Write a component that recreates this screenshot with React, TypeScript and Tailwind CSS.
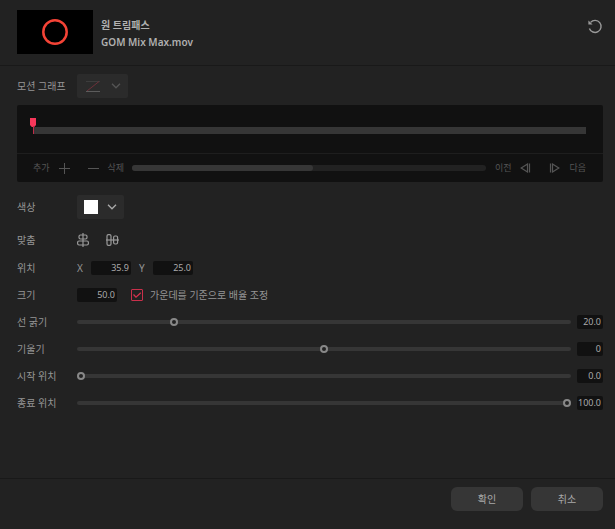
import { useId, useState } from "react";
import type { ReactNode } from "react";

function Chevron({ className }: { className: string }) {
  return (
    <svg viewBox="0 0 10 6" className={"h-[6px] w-[10px] " + className} fill="none" stroke="currentColor" strokeWidth="1.3">
      <path d="M1 0.8 5 4.8 9 0.8" />
    </svg>
  );
}

function Row({ label, htmlFor, className, children }: { label: string; htmlFor?: string; className: string; children: ReactNode }) {
  return (
    <div className={"flex items-center " + className}>
      <label htmlFor={htmlFor} className="w-[60px] shrink-0">
        {label}
      </label>
      {children}
    </div>
  );
}

function NumberBox({ id, initial }: { id: string; initial: string }) {
  const [value, setValue] = useState(initial);
  return (
    <input
      id={id}
      type="text"
      inputMode="decimal"
      value={value}
      onChange={(e) => setValue(e.target.value)}
      className="h-[14px] w-[40px] shrink-0 rounded-xs bg-[#111] pr-[2px] text-right text-[9px] leading-[14px] text-[#aaa] outline-none"
    />
  );
}

function SliderRow({ label, min, max, initial, decimals }: { label: string; min: number; max: number; initial: number; decimals: number }) {
  const id = useId();
  const [value, setValue] = useState(initial);
  return (
    <Row label={label} htmlFor={id} className="h-[27px]">
      <input
        id={id}
        type="range"
        min={min}
        max={max}
        value={value}
        onChange={(e) => setValue(Number(e.target.value))}
        className="h-[8px] min-w-0 flex-1 appearance-none bg-transparent [&::-webkit-slider-runnable-track]:h-[4px] [&::-webkit-slider-runnable-track]:rounded-full [&::-webkit-slider-runnable-track]:bg-[#363636] [&::-webkit-slider-thumb]:-mt-[2px] [&::-webkit-slider-thumb]:size-[8px] [&::-webkit-slider-thumb]:appearance-none [&::-webkit-slider-thumb]:rounded-full [&::-webkit-slider-thumb]:border-2 [&::-webkit-slider-thumb]:border-[#888] [&::-webkit-slider-thumb]:bg-[#222]"
      />
      <input
        aria-label={label + " 값"}
        type="text"
        inputMode="decimal"
        value={value.toFixed(decimals)}
        onChange={(e) => setValue(Number(e.target.value) || 0)}
        className="ml-[6px] h-[14px] w-[26px] shrink-0 rounded-xs bg-[#111] pr-[2px] text-right text-[9px] leading-[14px] text-[#aaa] outline-none"
      />
    </Row>
  );
}

export default function App() {
  const [centered, setCentered] = useState(true);
  return (
    <div className="flex min-h-screen flex-col bg-[#222] font-['Noto_Sans','Noto_Sans_CJK_KR',sans-serif] text-[10px] leading-[14px] text-[#959595]">
      <header className="flex items-start border-b border-[#191919] pt-[10px] pr-[12px] pb-[11px] pl-[17px]">
        <div className="flex h-[44px] w-[76px] items-center justify-center bg-black">
          <svg viewBox="0 0 26 26" className="size-[26px]" fill="none">
            <circle cx="13" cy="13" r="11.7" stroke="#f44336" strokeWidth="2.5" />
          </svg>
        </div>
        <div className="ml-[8px] pt-[7px] font-semibold leading-[17px] text-[#b0b0b0]">
          <h1>원 트림패스</h1>
          <p>GOM Mix Max.mov</p>
        </div>
        <button type="button" aria-label="초기화" className="mt-[8px] ml-auto text-[#999]">
          <svg viewBox="0 0 16 16" className="size-[16px]" fill="none" stroke="currentColor" strokeWidth="1.4">
            <path d="M3.6 4.4A6 6 0 1 1 2.4 10.4" />
            <path d="M1.4 2.4v4.2h4.2z" fill="currentColor" stroke="none" />
          </svg>
        </button>
      </header>

      <main className="flex-1 pr-[12px] pl-[17px]">
        <Row label="모션 그래프" htmlFor="motion" className="h-[39px]">
          <button id="motion" type="button" disabled aria-haspopup="listbox" className="flex h-[24px] w-[51px] items-center justify-between rounded-xs bg-[#2b2b2b] pr-[7px] pl-[9px]">
            <svg viewBox="0 0 14 12" className="h-[12px] w-[14px]" fill="none">
              <path d="M0 1.5h14" stroke="#3d3d3d" />
              <path d="M1 11 13 1.5" stroke="#6d3039" />
              <path d="M0 11.5h14" stroke="#5c5c5c" />
            </svg>
            <Chevron className="text-[#555]" />
          </button>
        </Row>

        <section aria-label="키프레임" className="rounded-xs bg-[#111] text-[#555]">
          <div className="border-b border-[#1e1e1e] pt-[22px] pr-[17px] pb-[19px] pl-[16px]">
            <div className="relative h-[7px] bg-[#363636]">
              <svg viewBox="0 0 6 16" className="absolute -top-[9px] -left-[3px] h-[16px] w-[6px]">
                <path d="M0 0h6v7L4.2 9H1.8L0 7z" fill="#f7375a" />
                <path d="M3.5 8v8" stroke="#c12c48" />
              </svg>
            </div>
          </div>
          <div className="flex h-[28px] items-center pr-[17px] pl-[16px] text-[9px]">
            <button type="button" disabled className="flex items-center gap-[9px]">
              추가
              <svg viewBox="0 0 11 11" className="size-[11px]" stroke="currentColor">
                <path d="M5.5 0v11M0 5.5h11" />
              </svg>
            </button>
            <button type="button" disabled className="ml-[18px] flex items-center gap-[9px]">
              <svg viewBox="0 0 11 11" className="size-[11px]" stroke="currentColor">
                <path d="M0 5.5h11" />
              </svg>
              삭제
            </button>
            <div className="ml-[8px] h-[6px] flex-1 rounded-full bg-[#222]">
              <div className="h-full w-[51%] rounded-full bg-[#363636]" />
            </div>
            <button type="button" disabled className="ml-[9px] flex items-center gap-[9px]">
              이전
              <svg viewBox="0 0 11 10" className="h-[10px] w-[11px]" fill="none" stroke="currentColor">
                <path d="M7.5 1v8L1.2 5zM9.5 0.5v9" strokeWidth="1.2" />
              </svg>
            </button>
            <button type="button" disabled className="ml-[18px] flex items-center gap-[9px]">
              <svg viewBox="0 0 11 10" className="h-[10px] w-[11px]" fill="none" stroke="currentColor">
                <path d="M3.5 1v8L9.8 5zM1.5 0.5v9" strokeWidth="1.2" />
              </svg>
              다음
            </button>
          </div>
        </section>

        <Row label="색상" htmlFor="color" className="mt-[10px] h-[30px]">
          <button id="color" type="button" aria-haspopup="dialog" className="flex h-[24px] w-[47px] items-center justify-between rounded-xs bg-[#2b2b2b] px-[7px]">
            <span className="size-[14px] bg-white" />
            <Chevron className="text-[#aaa]" />
          </button>
        </Row>

        <Row label="맞춤" className="mt-[4px] mb-[1px] h-[27px]">
          <div className="flex gap-[16px] text-[#999]">
            <button type="button" aria-label="가로 가운데 맞춤">
              <svg viewBox="0 0 13 14" className="h-[14px] w-[13px]" fill="none" stroke="currentColor" strokeWidth="1.2">
                <path d="M6 0v14" />
                <rect x="2" y="2" width="8" height="4" rx="1.4" />
                <rect x="0.6" y="8" width="10.8" height="4" rx="1.4" />
              </svg>
            </button>
            <button type="button" aria-label="세로 가운데 맞춤">
              <svg viewBox="0 0 13 14" className="h-[14px] w-[13px]" fill="none" stroke="currentColor" strokeWidth="1.2">
                <path d="M0 7h13" />
                <rect x="1" y="1.6" width="4" height="10.8" rx="1.4" />
                <rect x="7.6" y="3" width="4" height="8" rx="1.4" />
              </svg>
            </button>
          </div>
        </Row>

        <Row label="위치" htmlFor="pos-x" className="h-[27px]">
          <label htmlFor="pos-x" className="w-[14px]">X</label>
          <NumberBox id="pos-x" initial="35.9" />
          <label htmlFor="pos-y" className="ml-[8px] w-[14px]">Y</label>
          <NumberBox id="pos-y" initial="25.0" />
        </Row>

        <Row label="크기" htmlFor="size" className="h-[27px]">
          <NumberBox id="size" initial="50.0" />
          <label className="ml-[14px] flex items-center gap-[7px]">
            <span className="grid size-[12px]">
              <input
                type="checkbox"
                checked={centered}
                onChange={(e) => setCentered(e.target.checked)}
                className="peer col-start-1 row-start-1 size-[12px] appearance-none rounded-[1px] border border-[#c9304b]"
              />
              <svg viewBox="0 0 12 12" className="pointer-events-none invisible col-start-1 row-start-1 size-[12px] peer-checked:visible" fill="none" stroke="#d9334f" strokeWidth="1.2">
                <path d="M2.5 5.5 5 8.2 9.8 3.8" />
              </svg>
            </span>
            가운데를 기준으로 배율 조정
          </label>
        </Row>

        <SliderRow label="선 굵기" min={1} max={100} initial={20} decimals={1} />
        <SliderRow label="기울기" min={-180} max={180} initial={0} decimals={0} />
        <SliderRow label="시작 위치" min={0} max={100} initial={0} decimals={1} />
        <SliderRow label="종료 위치" min={0} max={100} initial={100} decimals={1} />
      </main>

      <footer className="flex justify-end gap-[8px] border-t border-[#191919] pt-[8px] pr-[12px] pb-[18px]">
        <button type="button" className="h-[24px] w-[72px] rounded-md bg-[#363636] text-[#aaa]">확인</button>
        <button type="button" className="h-[24px] w-[72px] rounded-md bg-[#363636] text-[#aaa]">취소</button>
      </footer>
    </div>
  );
}
